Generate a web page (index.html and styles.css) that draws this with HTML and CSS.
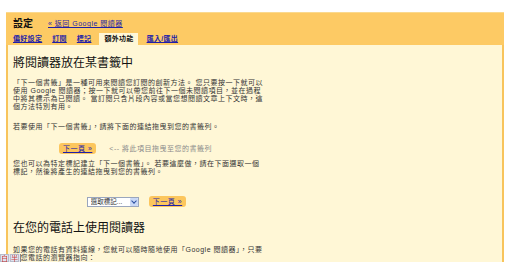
FILE: index.html
```html
<!DOCTYPE html>
<html lang="zh-Hant">
<head>
  <meta charset="UTF-8">
  <meta name="viewport" content="width=device-width, initial-scale=1.0">
  <title>設定 - Google 閱讀器</title>
  <link rel="stylesheet" href="styles.css">
</head>
<body>
  <div class="page">
    <div class="header">
      <div class="title-row">
        <span class="title">設定</span>
        <a href="#" class="back-link">« 返回 Google 閱讀器</a>
      </div>
      <div class="tabs">
        <a href="#" class="tab">偏好設定</a>
        <a href="#" class="tab">訂閱</a>
        <a href="#" class="tab">標記</a>
        <span class="tab active">額外功能</span>
        <a href="#" class="tab">匯入/匯出</a>
      </div>
    </div>

    <div class="panel">
      <div class="column">
        <h2 class="section-title first">將閱讀器放在某書籤中</h2>
        <p>「下一個書籤」是一種可用來閱讀您訂閱的創新方法。 您只要按一下就可以使用 Google 閱讀器；按一下就可以帶您前往下一個未閱讀項目，並在過程中將其標示為已閱讀。 當訂閱只含片段內容或當您想閱讀文章上下文時，這個方法特別有用。</p>
        <p>若要使用「下一個書籤」，請將下面的連結拖曳到您的書籤列。</p>

        <div class="drag-row">
          <a href="#" class="next-btn">下一頁 »</a>
          <span class="hint">&lt;-- 將此項目拖曳至您的書籤列</span>
        </div>

        <p class="tag-text">您也可以為特定標記建立「下一個書籤」。 若要這麼做，請在下面選取一個標記，然後將產生的連結拖曳到您的書籤列。</p>

        <div class="tag-row">
          <span class="select-wrap">
            <select class="tag-select">
              <option>選取標記...</option>
            </select>
            <span class="select-arrow"></span>
          </span>
          <a href="#" class="next-btn">下一頁 »</a>
        </div>

        <h2 class="section-title">在您的電話上使用閱讀器</h2>
        <p>如果您的電話有資料連線，您就可以隨時隨地使用「Google 閱讀器」，只要將您電話的瀏覽器指向：</p>
      </div>
    </div>
  </div>

  <div class="ime-bar">
    <span class="ime-key">白</span>
    <span class="ime-key">半</span>
  </div>
</body>
</html>
```

FILE: styles.css
```css
* {
  margin: 0;
  padding: 0;
  box-sizing: border-box;
}
html, body {
  height: 100%;
  overflow: hidden;
}
body {
  font-family: "Liberation Sans", "Noto Sans CJK TC", sans-serif;
  font-size: 7px;
  letter-spacing: 0.5px;
  line-height: 8px;
  color: #333;
  background: #ffffff;
}
a {
  color: #1f1fa8;
}
.page {
  margin: 12px 0 0 6px;
  width: 498px;
  height: 100%;
  display: flex;
  flex-direction: column;
}
.header {
  background-color: #fdca64;
  border-top: 1px solid #fbd98e;
}
.title-row {
  height: 20px;
  display: flex;
  align-items: center;
  gap: 15px;
  padding: 2px 0 0 7px;
}
.title {
  font-size: 10px;
  letter-spacing: 0;
  font-weight: bold;
  color: #111;
}
.tabs {
  height: 12px;
  display: flex;
  align-items: stretch;
  gap: 2px;
  padding-left: 3px;
}
.tab {
  display: flex;
  align-items: center;
  padding: 0 4px;
  font-weight: bold;
  letter-spacing: 0.3px;
}
.tab.active {
  background-color: #fff7d6;
  color: #111;
  padding: 0 4px 0 5px;
  margin: 0 3px 0 2px;
}
.panel {
  flex: 1;
  background-color: #fff7d6;
  border-left: 2px solid #f8c45c;
  border-right: 2px solid #f8c45c;
  padding: 0 5px;
}
.column {
  width: 253px;
}
.section-title {
  font-size: 12px;
  letter-spacing: 0;
  line-height: 14px;
  font-weight: normal;
  color: #111;
  margin: 14px 0 11px;
}
.section-title.first {
  margin: 11px 0 9px;
}
p {
  margin-bottom: 12px;
}
.drag-row {
  height: 11px;
  display: flex;
  align-items: center;
  justify-content: center;
  gap: 13px;
  margin-bottom: 6px;
  padding-right: 8px;
}
.next-btn {
  display: flex;
  align-items: center;
  height: 11px;
  padding: 0 4px;
  background-color: #fcc65d;
  border-radius: 3px;
}
.hint {
  color: #8a8a8a;
}
.tag-text {
  margin-bottom: 20px;
}
.tag-row {
  height: 11px;
  display: flex;
  align-items: center;
  justify-content: center;
  gap: 10px;
  padding-right: 6px;
}
.select-wrap {
  position: relative;
  display: inline-block;
  width: 52px;
  height: 10px;
}
.tag-select {
  appearance: none;
  width: 100%;
  height: 100%;
  font-family: inherit;
  font-size: 6.5px;
  color: #333;
  background: #ffffff;
  border: 1px solid #9aa6bd;
  padding: 0 0 0 3px;
}
.select-arrow {
  position: absolute;
  top: 1px;
  right: 1px;
  width: 8px;
  height: 8px;
  background: #c9d8f6;
  border-radius: 1px;
}
.select-arrow::after {
  content: "";
  position: absolute;
  left: 2px;
  top: 1.5px;
  width: 3px;
  height: 3px;
  border-right: 1px solid #2a4fa0;
  border-bottom: 1px solid #2a4fa0;
  transform: rotate(45deg);
}
.ime-bar {
  position: fixed;
  left: 0;
  bottom: 0;
  display: flex;
  gap: 1px;
  height: 8px;
  background: #e4e4ee;
  padding-right: 1px;
  border-right: 1px solid #888;
}
.ime-key {
  width: 9px;
  height: 8px;
  font-size: 7px;
  letter-spacing: 0;
  line-height: 8px;
  text-align: center;
  color: #c83a3a;
  background: #dfe3ef;
  border: 1px solid #b8bccb;
}
```
